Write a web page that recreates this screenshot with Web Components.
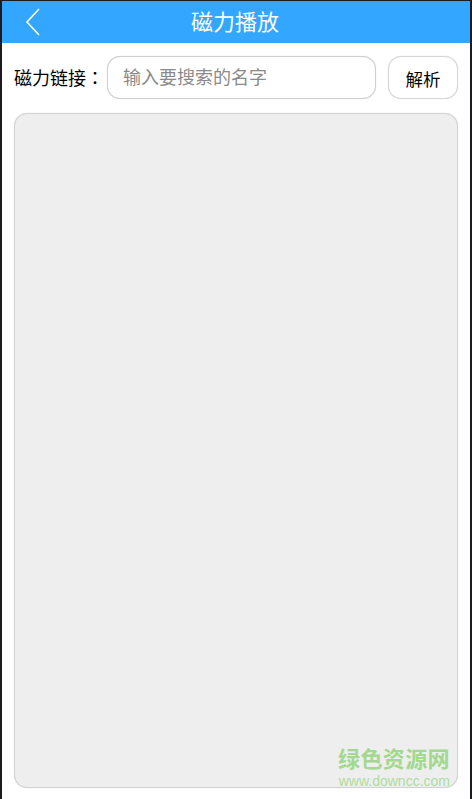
<!DOCTYPE html>
<html lang="zh">
<head>
<meta charset="utf-8">
<title>磁力播放</title>
<style>
  html, body { margin: 0; height: 100%; background: #1c1c20; overflow: hidden; }
  body { font-family: "Noto Sans CJK SC", "Liberation Sans", sans-serif; }
</style>
</head>
<body>
<magnet-page>
  <title-bar>磁力播放</title-bar>
  <search-row label="磁力链接" placeholder="输入要搜索的名字" action="解析"></search-row>
  <result-panel></result-panel>
</magnet-page>

<script>
class MagnetPage extends HTMLElement {
  constructor() {
    super();
    this.attachShadow({ mode: 'open' }).innerHTML = `
      <style>
        :host {
          display: flex;
          flex-direction: column;
          box-sizing: border-box;
          height: 798px;
          margin: 1px 2px 0;
          background: #fff;
        }
      </style>
      <slot></slot>`;
  }
}
customElements.define('magnet-page', MagnetPage);

class TitleBar extends HTMLElement {
  constructor() {
    super();
    this.attachShadow({ mode: 'open' }).innerHTML = `
      <style>
        :host {
          display: flex;
          flex: none;
          position: relative;
          box-sizing: border-box;
          align-items: center;
          justify-content: center;
          height: 42px;
          padding: 0 2px 3px 0;
          background: #33a6ff;
          color: #fff;
          font-size: 22px;
          line-height: 39px;
        }
        svg { position: absolute; left: 22px; top: 7px; }
      </style>
      <svg width="17" height="28" viewBox="0 0 17 28" fill="none" stroke="#fff" stroke-width="1.6">
        <path d="M15 1 L3 14 L15 27"/>
      </svg>
      <span><slot></slot></span>`;
  }
}
customElements.define('title-bar', TitleBar);

class SearchRow extends HTMLElement {
  constructor() {
    super();
    this.attachShadow({ mode: 'open' }).innerHTML = `
      <style>
        :host {
          display: flex;
          flex: none;
          align-items: center;
          height: 43px;
          margin: 13px 12px 14px;
        }
        .label { flex: none; width: 93px; padding-bottom: 2px; font-size: 18px; color: #000; white-space: nowrap; }
        /* the reference has a centred colon, which is the TC form of the glyph */
        .colon { font-family: "Noto Sans CJK TC", sans-serif; }
        input {
          box-sizing: border-box;
          flex: none;
          width: 269px;
          height: 43px;
          padding: 0 15px 4px;
          border: 1px solid #cfcfcf;
          border-radius: 13px;
          outline: none;
          background: #fff;
          box-shadow: 0 0 1px #cfcfcf;
          font: 18px "Noto Sans CJK SC", "Liberation Sans", sans-serif;
        }
        input::placeholder { color: #8a8a8a; opacity: 1; }
        button {
          box-sizing: border-box;
          flex: none;
          width: 70px;
          height: 43px;
          margin-left: 12px;
          padding: 1px 0 0;
          border: 1px solid #d6d6d6;
          border-radius: 13px;
          background: #fff;
          box-shadow: 0 0 1px #d6d6d6;
          color: #000;
          font: 17.5px "Noto Sans CJK SC", "Liberation Sans", sans-serif;
        }
      </style>
      <span class="label"><span class="text"></span><span class="colon" lang="zh-Hant">：</span></span>
      <input type="text">
      <button type="button"></button>`;
  }

  connectedCallback() {
    const root = this.shadowRoot;
    root.querySelector('.text').textContent = this.getAttribute('label');
    root.querySelector('input').placeholder = this.getAttribute('placeholder');
    root.querySelector('button').textContent = this.getAttribute('action');
  }
}
customElements.define('search-row', SearchRow);

class ResultPanel extends HTMLElement {
  constructor() {
    super();
    this.attachShadow({ mode: 'open' }).innerHTML = `
      <style>
        :host {
          display: block;
          box-sizing: border-box;
          flex: none;
          position: relative;
          height: 675px;
          margin: 0 12px;
          background: #eeeeee;
          border: 1px solid #d2d2d2;
          border-radius: 13px;
          box-shadow: 0 0 1px #d2d2d2;
        }
        /* site watermark, sits over the panel corner */
        .mark {
          position: absolute;
          right: 7px;
          bottom: -1px;
          color: #a2d98e;
          text-align: right;
        }
        .name {
          font: 700 22px/26px "Liberation Sans", "Noto Sans CJK SC", sans-serif;
          letter-spacing: .4px;
        }
        .url { margin-top: 1px; font: 14px/14px "Liberation Sans", sans-serif; color: #aedd9d; }
      </style>
      <div class="mark">
        <div class="name">绿色资源网</div>
        <div class="url">www.downcc.com</div>
      </div>`;
  }
}
customElements.define('result-panel', ResultPanel);
</script>
</body>
</html>
